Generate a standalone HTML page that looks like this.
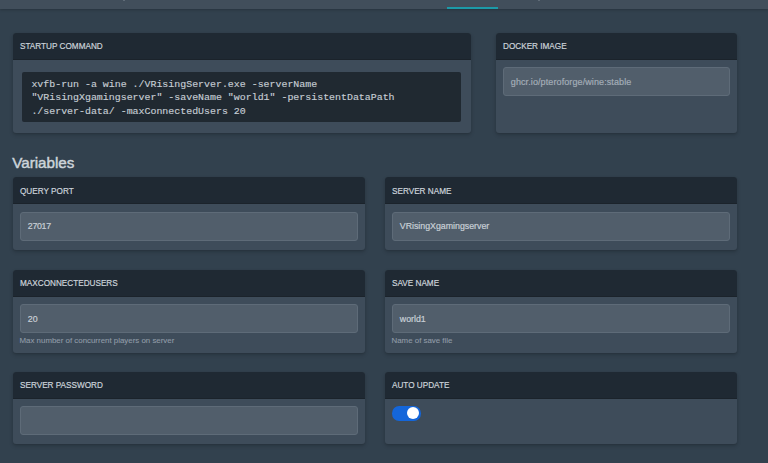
<!DOCTYPE html>
<html><head><meta charset="utf-8">
<style>
*{margin:0;padding:0;box-sizing:border-box}
html,body{width:768px;height:463px;overflow:hidden}
body{background:#32414e;font-family:"Liberation Sans",sans-serif;position:relative}
.abs{position:absolute}
.tabbar{left:0;top:0;width:768px;height:9px;background:#414e5b;box-shadow:0 1px 3px rgba(0,0,0,.22)}
.tabul{left:447px;top:7px;width:51px;height:2px;background:#1c9aa8}
.card{position:absolute;background:#3e4c5a;border-radius:3px;box-shadow:0 2px 4px rgba(0,0,0,.16),0 1px 2px rgba(0,0,0,.1)}
.hd{position:absolute;left:0;top:0;right:0;background:#1f2933;border-radius:3px 3px 0 0;border-bottom:1px solid #1b232b;color:#cdd4db;font-size:9.3px;white-space:nowrap}
.hd span{position:absolute;left:7px;top:0px;transform:scaleX(0.88);-webkit-text-stroke:0.2px currentColor;transform-origin:0 50%}
.inp{position:absolute;background:#515e6b;border:1px solid #5e6b78;border-radius:3px;color:#c8cfd6;font-size:8.8px;-webkit-text-stroke:0.2px currentColor;padding-left:6.8px;white-space:nowrap}
.desc{position:absolute;color:#909ba7;font-size:7.9px;-webkit-text-stroke:0.1px currentColor;white-space:nowrap}
.code{position:absolute;background:#202931;border-radius:2px;color:#c6cdd4;-webkit-text-stroke:0.15px currentColor;font-family:"Liberation Mono",monospace;font-size:9.93px;line-height:13.3px;padding:6.1px 0 0 9.2px;white-space:pre}
h2{position:absolute;left:12.2px;top:152.5px;font-size:15.2px;font-weight:normal;-webkit-text-stroke:0.45px currentColor;color:#cdd4da;line-height:20px}
.tog{position:absolute;left:392px;top:406.3px;width:28.8px;height:14.4px;border-radius:7.2px;background:#1466da}
.knob{position:absolute;right:1.4px;top:1.1px;width:12px;height:12px;border-radius:50%;background:#fff}
</style></head><body>
<div class="abs tabbar"></div>
<div class="abs tabul"></div>
<div class="abs" style="left:123px;top:0;width:2px;height:1px;background:#5f6b77"></div>
<div class="abs" style="left:538px;top:0;width:2px;height:1px;background:#5f6b77"></div>

<!-- Startup command -->
<div class="card" style="left:13px;top:33.3px;width:458px;height:99.7px">
  <div class="hd" style="height:26.4px;line-height:26.4px"><span>STARTUP COMMAND</span></div>
  <div class="code" style="left:9.2px;top:38.8px;width:439px;height:49.5px">xvfb-run -a wine ./VRisingServer.exe -serverName
"VRisingXgamingserver" -saveName "world1" -persistentDataPath
./server-data/ -maxConnectedUsers 20</div>
</div>

<!-- Docker image -->
<div class="card" style="left:495.5px;top:33.3px;width:241.5px;height:99.7px">
  <div class="hd" style="height:26.4px;line-height:26.4px"><span>DOCKER IMAGE</span></div>
  <div class="inp" style="left:7.5px;top:33.8px;width:226.5px;height:28.5px;line-height:28.5px;font-size:9px;letter-spacing:0.1px;color:#a3adb7">ghcr.io/pteroforge/wine:stable</div>
</div>

<h2>Variables</h2>

<!-- Row 1 -->
<div class="card" style="left:13px;top:177px;width:352px;height:73.3px">
  <div class="hd" style="height:27.3px;line-height:27.8px"><span style="top:0.5px">QUERY PORT</span></div>
  <div class="inp" style="left:7px;top:35.2px;width:337.6px;height:28.5px;line-height:27px;letter-spacing:-0.3px">27017</div>
</div>
<div class="card" style="left:385px;top:177px;width:352px;height:73.3px">
  <div class="hd" style="height:27.3px;line-height:27.8px"><span style="top:0.5px">SERVER NAME</span></div>
  <div class="inp" style="left:7px;top:35.2px;width:337.6px;height:28.5px;line-height:27px;">VRisingXgamingserver</div>
</div>

<!-- Row 2 -->
<div class="card" style="left:13px;top:269.5px;width:352px;height:83.2px">
  <div class="hd" style="height:27.3px;line-height:27.3px"><span>MAXCONNECTEDUSERS</span></div>
  <div class="inp" style="left:7px;top:34.8px;width:337.6px;height:28.5px;line-height:28px;">20</div>
  <div class="desc" style="left:6.5px;top:66px;line-height:9px">Max number of concurrent players on server</div>
</div>
<div class="card" style="left:385px;top:269.5px;width:352px;height:83.2px">
  <div class="hd" style="height:27.3px;line-height:27.3px"><span>SAVE NAME</span></div>
  <div class="inp" style="left:7px;top:34.8px;width:337.6px;height:28.5px;line-height:28px;">world1</div>
  <div class="desc" style="left:6.5px;top:66px;line-height:9px">Name of save file</div>
</div>

<!-- Row 3 -->
<div class="card" style="left:13px;top:372px;width:352px;height:72px">
  <div class="hd" style="height:26.5px;line-height:26.5px"><span>SERVER PASSWORD</span></div>
  <div class="inp" style="left:7px;top:34.2px;width:337.6px;height:28.6px;"></div>
</div>
<div class="card" style="left:385px;top:372px;width:352px;height:72px">
  <div class="hd" style="height:26.5px;line-height:26.5px"><span>AUTO UPDATE</span></div>
</div>
<div class="tog"><div class="knob"></div></div>
</body></html>
